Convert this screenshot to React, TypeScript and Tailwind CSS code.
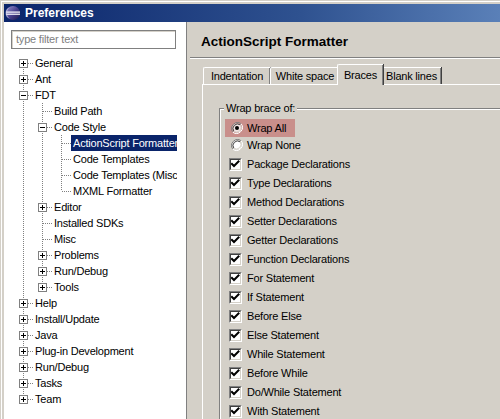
import React from "react";

type TNode = { label: string; children?: TNode[]; open?: boolean; selected?: boolean };

const tree: TNode[] = [
  { label: "General", children: [{ label: "x" }] },
  { label: "Ant", children: [{ label: "x" }] },
  {
    label: "FDT",
    open: true,
    children: [
      { label: "Build Path" },
      {
        label: "Code Style",
        open: true,
        children: [
          { label: "ActionScript Formatter", selected: true },
          { label: "Code Templates" },
          { label: "Code Templates (Miscellaneous)" },
          { label: "MXML Formatter" },
        ],
      },
      { label: "Editor", children: [{ label: "x" }] },
      { label: "Installed SDKs" },
      { label: "Misc" },
      { label: "Problems", children: [{ label: "x" }] },
      { label: "Run/Debug", children: [{ label: "x" }] },
      { label: "Tools", children: [{ label: "x" }] },
    ],
  },
  { label: "Help", children: [{ label: "x" }] },
  { label: "Install/Update", children: [{ label: "x" }] },
  { label: "Java", children: [{ label: "x" }] },
  { label: "Plug-in Development", children: [{ label: "x" }] },
  { label: "Run/Debug", children: [{ label: "x" }] },
  { label: "Tasks", children: [{ label: "x" }] },
  { label: "Team", children: [{ label: "x" }] },
];

type Row = { node: TNode; ancestors: boolean[]; hasMore: boolean; first: boolean };

function flatten(nodes: TNode[], ancestors: boolean[], out: Row[], root: boolean) {
  nodes.forEach((n, i) => {
    const hasMore = i < nodes.length - 1;
    out.push({ node: n, ancestors, hasMore, first: root && i === 0 });
    if (n.open && n.children) flatten(n.children, [...ancestors, hasMore], out, false);
  });
  return out;
}

const DOT = "#808080";

function AncestorCell({ more }: { more: boolean }) {
  return (
    <svg width="19" height="16" className="shrink-0 block">
      {more && <line x1="9.5" y1="0" x2="9.5" y2="16" stroke={DOT} strokeDasharray="1 1" />}
    </svg>
  );
}

function ConnectorCell({ row }: { row: Row }) {
  const hasKids = !!row.node.children;
  const open = !!row.node.open;
  return (
    <svg width="19" height="16" className="shrink-0 block">
      {!row.first && <line x1="9.5" y1="0" x2="9.5" y2="8" stroke={DOT} strokeDasharray="1 1" />}
      {row.hasMore && <line x1="9.5" y1="8" x2="9.5" y2="16" stroke={DOT} strokeDasharray="1 1" />}
      <line x1={hasKids ? 14 : 10} y1="8.5" x2="19" y2="8.5" stroke={DOT} strokeDasharray="1 1" />
      {hasKids && (
        <g>
          <rect x="5.5" y="4.5" width="8" height="8" fill="#ffffff" stroke="#808080" />
          <line x1="7" y1="8.5" x2="12" y2="8.5" stroke="#000000" />
          {!open && <line x1="9.5" y1="6" x2="9.5" y2="11" stroke="#000000" />}
        </g>
      )}
    </svg>
  );
}

function Tree() {
  const rows = flatten(tree, [], [], true);
  return (
    <div className="w-[173px] overflow-hidden mt-[6px]">
      {rows.map((r, i) => (
        <div key={i} className="flex h-[16px] items-stretch pl-[10px] whitespace-nowrap">
          {r.ancestors.map((m, j) => (
            <AncestorCell key={j} more={m} />
          ))}
          <ConnectorCell row={r} />
          <span
            className={
              "px-[2px] leading-[16px] " + (r.node.selected ? "bg-[#0a246a] text-white" : "text-black")
            }
          >
            {r.node.label}
          </span>
        </div>
      ))}
    </div>
  );
}

function Check() {
  return (
    <span className="block w-[13px] h-[13px] border border-t-[#808080] border-l-[#808080] border-r-white border-b-white shrink-0">
      <span className="block w-full h-full border border-t-[#404040] border-l-[#404040] border-r-[#d4d0c8] border-b-[#d4d0c8] bg-white">
        <svg width="9" height="9" className="block">
          <path d="M1 3.5 L3 5.5 L7.5 1" fill="none" stroke="#000" strokeWidth="2" strokeLinecap="square" transform="translate(0,0.5)" />
        </svg>
      </span>
    </span>
  );
}

function Radio({ on }: { on: boolean }) {
  return (
    <svg width="12" height="12" className="block shrink-0">
      <path d="M10.2 1.8 A6 6 0 0 0 1.8 10.2" fill="none" stroke="#808080" strokeWidth="1" />
      <path d="M1.8 10.2 A6 6 0 0 0 10.2 1.8" fill="none" stroke="#ffffff" strokeWidth="1" />
      <circle cx="6" cy="6" r="4.5" fill={on ? "#f4e6e5" : "#ffffff"} stroke="none" />
      <path d="M9.2 2.8 A4.6 4.6 0 0 0 2.8 9.2" fill="none" stroke="#404040" strokeWidth="1" />
      <path d="M2.8 9.2 A4.6 4.6 0 0 0 9.2 2.8" fill="none" stroke="#d4d0c8" strokeWidth="1" />
      {on && <circle cx="6" cy="6" r="2" fill="#000" />}
    </svg>
  );
}

function EclipseIcon() {
  return (
    <svg width="16" height="16" viewBox="0 0 16 16" className="block">
      <defs>
        <linearGradient id="eg" x1="0" y1="0" x2="1" y2="1">
          <stop offset="0" stopColor="#9b95d0" />
          <stop offset="0.5" stopColor="#4a4290" />
          <stop offset="1" stopColor="#1e1848" />
        </linearGradient>
      </defs>
      <circle cx="8" cy="8" r="7" fill="url(#eg)" />
      <rect x="1" y="6.5" width="14" height="1.2" fill="#ffffff" />
      <rect x="1" y="8.6" width="14" height="1.2" fill="#ffffff" />
      <path d="M5 2.2 A6 6 0 0 0 5 13.8 A7 7 0 0 1 5 2.2 Z" fill="#d8d4f0" opacity="0.6" />
    </svg>
  );
}

const checks = [
  "Package Declarations",
  "Type Declarations",
  "Method Declarations",
  "Setter Declarations",
  "Getter Declarations",
  "Function Declarations",
  "For Statement",
  "If Statement",
  "Before Else",
  "Else Statement",
  "While Statement",
  "Before While",
  "Do/While Statement",
  "With Statement",
];

function Tab({ label, w, selected }: { label: string; w: string; selected?: boolean }) {
  if (selected) {
    return (
      <div
        className={
          w +
          " -mx-[2px] relative z-10 h-[21px] -mb-px bg-[#d4d0c8] border-l border-t border-white rounded-tl-[2px] shadow-[inset_-1px_0_0_#808080,1px_0_0_#404040] flex items-center justify-center"
        }
      >
        {label}
      </div>
    );
  }
  return (
    <div
      className={
        w +
        " mt-[3px] h-[17px] bg-[#d4d0c8] border-l border-t border-white rounded-tl-[2px] shadow-[inset_-1px_0_0_#808080,1px_0_0_#404040] flex items-center justify-center"
      }
    >
      {label}
    </div>
  );
}

export default function App() {
  return (
    <div className="w-[500px] h-[419px] overflow-hidden bg-[#d4d0c8] pl-px pt-px font-['Liberation_Sans',Arial,sans-serif] text-[11px] tracking-[-0.2px] text-black select-none">
      <div className="h-full border-l border-t border-white pl-[2px] pt-[2px] flex flex-col">
        {/* Title bar */}
        <div className="h-[18px] shrink-0 flex items-center gap-[4px] pl-px bg-[linear-gradient(90deg,#0a246a_0%,#2f5290_60%,#5a80b8_100%)]">
          <EclipseIcon />
          <span className="text-white font-bold text-[12px] tracking-normal leading-none">Preferences</span>
        </div>
        {/* Body */}
        <div className="flex-1 flex min-h-0">
          {/* left panel */}
          <div className="w-[183px] shrink-0 bg-white border-r border-[#808080] flex flex-col">
            <div className="ml-[7px] mt-[8px] w-[165px] h-[19px] border border-[#808080] shadow-[inset_1px_1px_0_#d4d0c8] bg-white flex items-center pl-[4px] text-[#808080]">
              type filter text
            </div>
            <Tree />
          </div>
          {/* sash */}
          <div className="w-[3px] shrink-0" />
          {/* right panel */}
          <div className="flex-1 min-w-0 flex flex-col">
            <div className="h-[35px] shrink-0 pl-[11px] pt-[12px]">
              <div className="font-bold text-[13.5px] tracking-normal leading-[16px]">ActionScript Formatter</div>
            </div>
            <div className="h-[2px] shrink-0 border-t border-[#808080] border-b border-b-white" />
            <div className="pl-[12px] pt-[5px] flex-1 flex flex-col min-h-0">
              <div className="flex pl-px items-end">
                <Tab label="Indentation" w="w-[67px]" />
                <Tab label="White space" w="w-[69px]" />
                <Tab label="Braces" w="w-[46px]" selected />
                <Tab label="Blank lines" w="w-[60px]" />
              </div>
              <div className="flex-1 border-l border-t border-white pl-[16px] pt-[17px]">
                <fieldset className="border border-[#808080] shadow-[inset_1px_1px_0_#ffffff,1px_1px_0_#ffffff] pb-[10px] w-[400px]">
                  <legend className="ml-[4px] px-[2px] bg-[#d4d0c8] leading-[13px]">Wrap brace of:</legend>
                  <div className="pt-[4px]">
                    <div className="ml-[5px] w-[70px] h-[18px] bg-[#c98f8b] flex items-center pl-[6px] gap-[4px]">
                      <Radio on />
                      <span>Wrap All</span>
                    </div>
                    <div className="ml-[5px] h-[16px] flex items-center pl-[6px] gap-[4px]">
                      <Radio on={false} />
                      <span>Wrap None</span>
                    </div>
                    <div className="pt-[2px]">
                      {checks.map((c) => (
                        <div key={c} className="ml-[9px] h-[19px] flex items-center gap-[5px]">
                          <Check />
                          <span>{c}</span>
                        </div>
                      ))}
                    </div>
                  </div>
                </fieldset>
              </div>
            </div>
          </div>
        </div>
      </div>
    </div>
  );
}
